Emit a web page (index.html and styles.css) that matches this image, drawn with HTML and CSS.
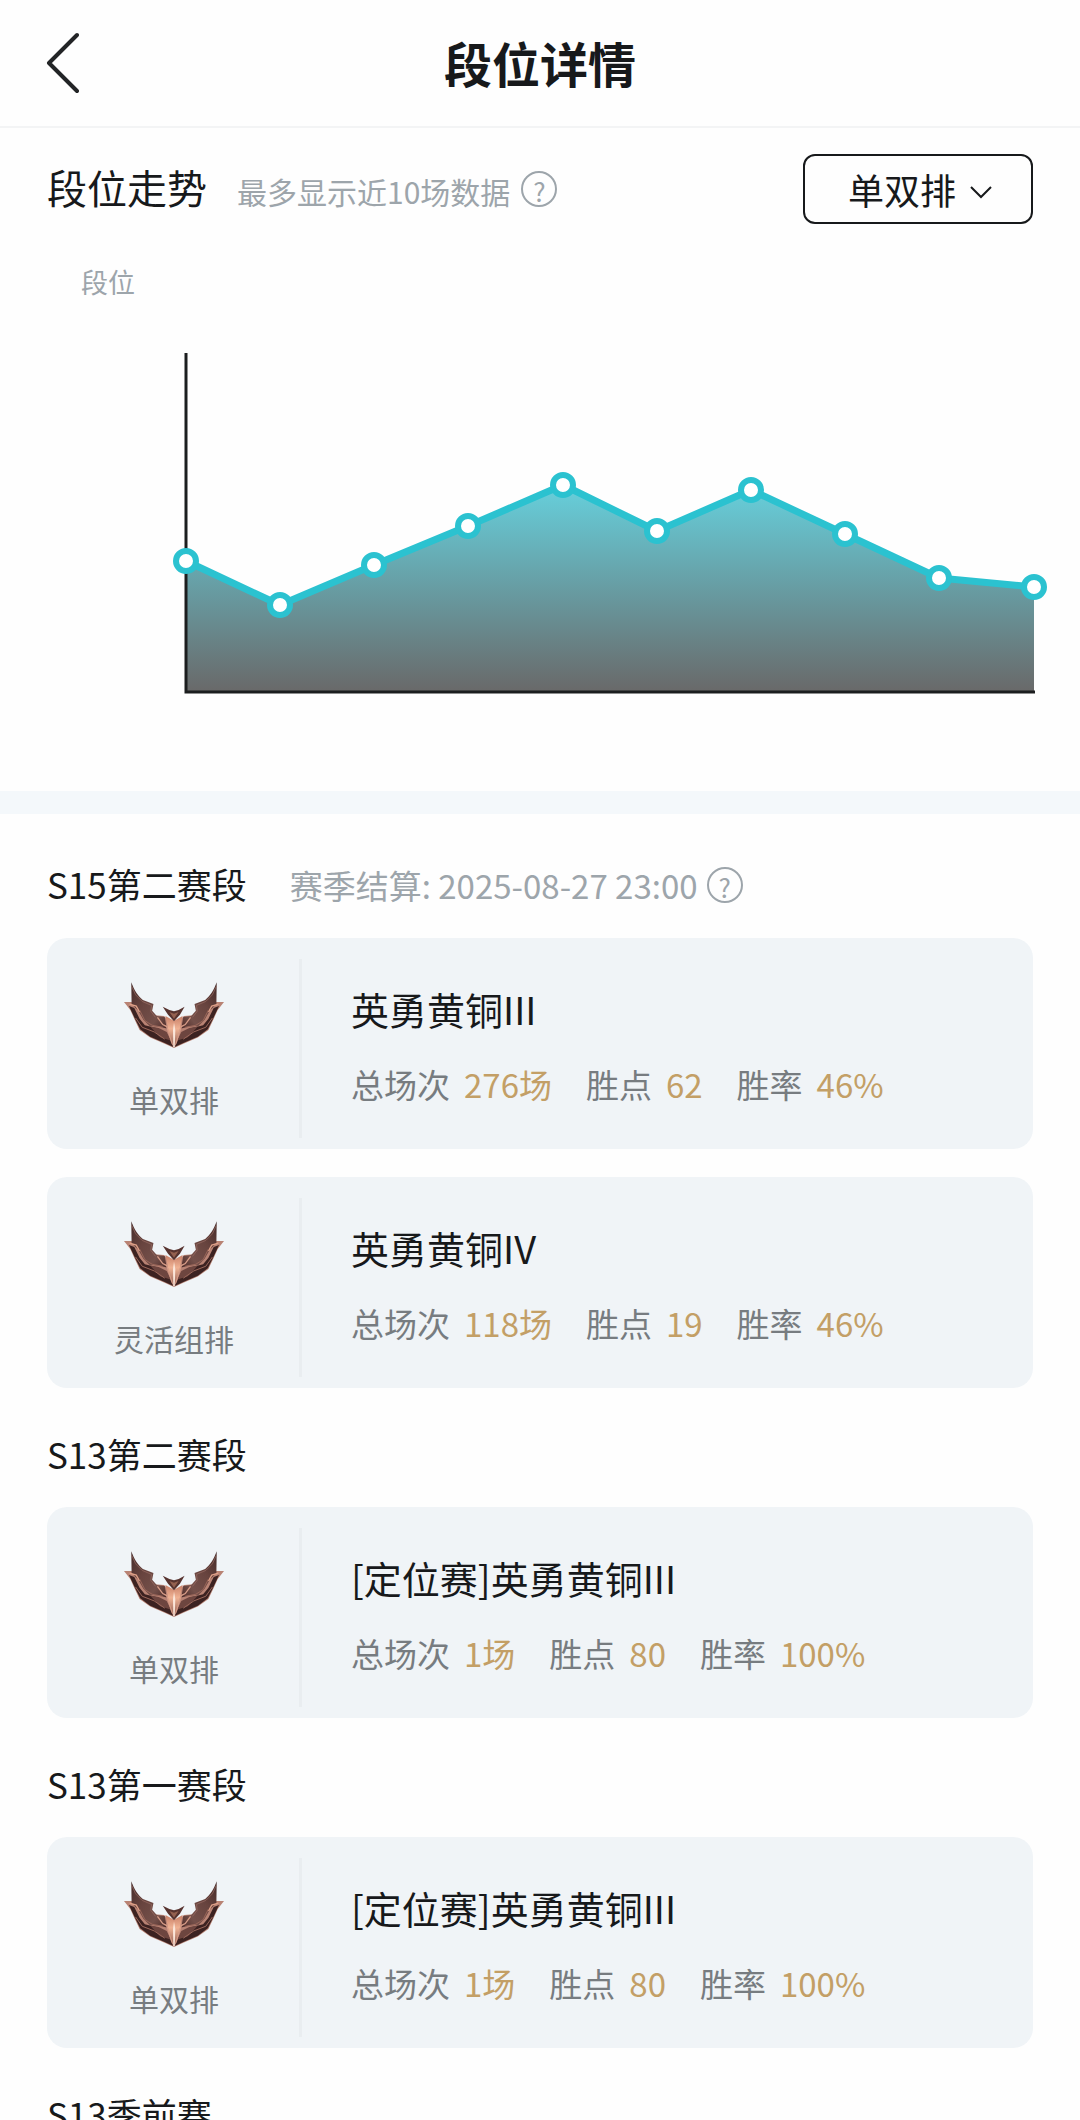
FILE: index.html
```html
<!DOCTYPE html>
<html lang="zh-CN">
<head>
<meta charset="utf-8">
<meta name="viewport" content="width=device-width, initial-scale=1">
<title>段位详情</title>
<link rel="stylesheet" href="styles.css">
</head>
<body>
<svg class="defs" width="0" height="0" aria-hidden="true">
  <defs>
    <linearGradient id="wing" x1="0" y1="0" x2="1" y2="1">
      <stop offset="0" stop-color="#432928"/>
      <stop offset="0.4" stop-color="#68443f"/>
      <stop offset="0.75" stop-color="#74504a"/>
      <stop offset="1" stop-color="#4c2b29"/>
    </linearGradient>
    <linearGradient id="core" x1="0" y1="0" x2="0" y2="1">
      <stop offset="0" stop-color="#c98068"/>
      <stop offset="0.4" stop-color="#efb294"/>
      <stop offset="1" stop-color="#8d5a50"/>
    </linearGradient>
    <g id="half">
      <path fill="#b98374" d="M7 78L34 78L60 100L100 118L128 120L140 132L158 217L128 203L86 185L54 162L38 128L26 102Z"/>
      <path fill="url(#wing)" d="M29 18C38 42 48 58 64 72L96 84L92 104L106 120L130 123L136 158L112 152L84 150L66 132L50 104L30 84Z"/>
      <path fill="#3c2221" d="M22 90L38 96L54 128L70 148L104 156L136 172L156 214L128 201L86 183L56 160L40 128Z"/>
      <path fill="#6d453f" d="M86 152L112 156L136 168L148 194L116 184Z"/>
      <path fill="none" stroke="#e0a188" stroke-width="4" d="M24 84L44 90L54 108"/>
      <path fill="none" stroke="#9c685b" stroke-width="3" d="M54 102L70 134L92 148L124 154M42 126L62 154L98 168L130 190"/>
      <path fill="none" stroke="#d79c87" stroke-width="4" d="M108 124L124 146L136 152L154 206"/>
      <path fill="none" stroke="#9c6f66" stroke-width="2" d="M30 30L42 56L62 76L90 88L88 106L102 124"/>
    </g>
    <symbol id="bronze" viewBox="4 14 308 206">
      <use href="#half"/>
      <use href="#half" transform="matrix(-1 0 0 1 316 0)"/>
      <path fill="url(#core)" d="M132 120L158 134L184 120L174 166L158 216L142 166Z"/>
      <path fill="#fbe6da" d="M155 162L158 140L162 162L160 214L156 214Z"/>
      <path fill="#57332f" d="M124 92L144 102L158 106L172 102L190 92L176 116L158 136L140 116Z"/>
      <path fill="#94604f" d="M144 108L158 113L172 108L158 128Z"/>
    </symbol>
  </defs>
</svg>
<div class="app">
  <header class="topbar">
    <button class="back" type="button" aria-label="返回">
      <svg width="34" height="62" viewBox="0 0 34 62" aria-hidden="true"><path d="M32 3L4 31L32 59"/></svg>
    </button>
    <h1 class="page-title">段位详情</h1>
  </header>

  <main>
    <section class="trend">
      <div class="trend-head">
        <div class="heading-row">
          <h2 class="trend-title">段位走势</h2>
          <span class="trend-note">最多显示近10场数据</span>
          <button class="help" type="button" aria-label="数据说明">?</button>
        </div>
        <div class="picker">
          <select class="picker-select" aria-label="排位类型">
            <option>单双排</option>
            <option>灵活组排</option>
          </select>
          <svg class="picker-arrow" width="22" height="13" viewBox="0 0 22 13" aria-hidden="true"><path d="M1 1L11 11L21 1"/></svg>
        </div>
      </div>
      <p class="axis-label">段位</p>
      <svg class="chart" viewBox="0 299 1080 431" role="img" aria-label="近10场段位走势图">
        <defs>
          <linearGradient id="area" gradientUnits="userSpaceOnUse" x1="0" y1="485" x2="0" y2="691">
            <stop offset="0" stop-color="#66d0dc"/>
            <stop offset="1" stop-color="#696969"/>
          </linearGradient>
        </defs>
        <path fill="url(#area)" d="M186 560L280 604L374 564L468 525L563 484L657 530L751 489L845 533L939 577L1034 586V691H186Z"/>
        <path class="axis" d="M186 352V691H1035"/>
        <path class="line" d="M186 560L280 604L374 564L468 525L563 484L657 530L751 489L845 533L939 577L1034 586"/>
        <g class="dots">
          <circle cx="186" cy="560" r="10"/>
          <circle cx="280" cy="604" r="10"/>
          <circle cx="374" cy="564" r="10"/>
          <circle cx="468" cy="525" r="10"/>
          <circle cx="563" cy="484" r="10"/>
          <circle cx="657" cy="530" r="10"/>
          <circle cx="751" cy="489" r="10"/>
          <circle cx="845" cy="533" r="10"/>
          <circle cx="939" cy="577" r="10"/>
          <circle cx="1034" cy="586" r="10"/>
        </g>
      </svg>
    </section>

    <div class="seasons">
      <section class="season">
        <div class="heading-row season-head">
          <h2 class="season-title">S15第二赛段</h2>
          <span class="season-note">赛季结算: 2025-08-27 23:00</span>
          <button class="help" type="button" aria-label="结算说明">?</button>
        </div>
        <div class="cards">
          <article class="card">
            <div class="queue">
              <svg class="emblem" aria-hidden="true"><use href="#bronze"/></svg>
              <span class="queue-name">单双排</span>
            </div>
            <div class="record">
              <h3 class="tier">英勇黄铜III</h3>
              <dl class="stats">
                <div class="stat"><dt>总场次</dt><dd>276场</dd></div>
                <div class="stat"><dt>胜点</dt><dd>62</dd></div>
                <div class="stat"><dt>胜率</dt><dd>46%</dd></div>
              </dl>
            </div>
          </article>
          <article class="card">
            <div class="queue">
              <svg class="emblem" aria-hidden="true"><use href="#bronze"/></svg>
              <span class="queue-name">灵活组排</span>
            </div>
            <div class="record">
              <h3 class="tier">英勇黄铜IV</h3>
              <dl class="stats">
                <div class="stat"><dt>总场次</dt><dd>118场</dd></div>
                <div class="stat"><dt>胜点</dt><dd>19</dd></div>
                <div class="stat"><dt>胜率</dt><dd>46%</dd></div>
              </dl>
            </div>
          </article>
        </div>
      </section>

      <section class="season">
        <div class="heading-row season-head">
          <h2 class="season-title">S13第二赛段</h2>
        </div>
        <div class="cards">
          <article class="card">
            <div class="queue">
              <svg class="emblem" aria-hidden="true"><use href="#bronze"/></svg>
              <span class="queue-name">单双排</span>
            </div>
            <div class="record">
              <h3 class="tier">[定位赛]英勇黄铜III</h3>
              <dl class="stats">
                <div class="stat"><dt>总场次</dt><dd>1场</dd></div>
                <div class="stat"><dt>胜点</dt><dd>80</dd></div>
                <div class="stat"><dt>胜率</dt><dd>100%</dd></div>
              </dl>
            </div>
          </article>
        </div>
      </section>

      <section class="season">
        <div class="heading-row season-head">
          <h2 class="season-title">S13第一赛段</h2>
        </div>
        <div class="cards">
          <article class="card">
            <div class="queue">
              <svg class="emblem" aria-hidden="true"><use href="#bronze"/></svg>
              <span class="queue-name">单双排</span>
            </div>
            <div class="record">
              <h3 class="tier">[定位赛]英勇黄铜III</h3>
              <dl class="stats">
                <div class="stat"><dt>总场次</dt><dd>1场</dd></div>
                <div class="stat"><dt>胜点</dt><dd>80</dd></div>
                <div class="stat"><dt>胜率</dt><dd>100%</dd></div>
              </dl>
            </div>
          </article>
        </div>
      </section>

      <section class="season">
        <div class="heading-row season-head">
          <h2 class="season-title">S13季前赛</h2>
        </div>
      </section>
    </div>
  </main>
</div>
</body>
</html>
```
FILE: styles.css
```css
* {
  box-sizing: border-box;
}

body {
  margin: 0;
  background: #fefefe;
  color: #17191b;
  font-family: "Noto Sans CJK SC", "Noto Sans", sans-serif;
}

h1,
h2,
h3,
p,
dl,
dd {
  margin: 0;
  font-weight: 400;
}

button,
select {
  margin: 0;
  padding: 0;
  border: 0;
  background: none;
  color: inherit;
  font-family: inherit;
}

svg {
  display: block;
}

.defs {
  position: absolute;
}

.app {
  height: 100vh;
  overflow: hidden auto;
  scrollbar-width: none;
}

/* Top bar */
.topbar {
  display: grid;
  grid-template-columns: 1fr auto 1fr;
  align-items: center;
  height: 128px;
  padding: 0 45px;
  border-bottom: 2px solid #f3f4f5;
}

.back {
  justify-self: start;
}

.back path {
  fill: none;
  stroke: #222426;
  stroke-width: 4;
  stroke-linecap: round;
  stroke-linejoin: round;
}

.page-title {
  padding-bottom: 2px;
  font-size: 48px;
  font-weight: 700;
  line-height: 64px;
}

/* Trend */
.trend {
  padding: 26px 0 60px;
  border-bottom: 23px solid #f4f8fb;
}

.trend-head {
  display: flex;
  align-items: center;
  justify-content: space-between;
  padding: 0 47px;
}

.heading-row {
  display: flex;
  align-items: baseline;
}

.trend-title {
  font-size: 40px;
  line-height: 48px;
}

.trend-note {
  margin-left: 30px;
  color: #9da5ab;
  font-size: 30px;
  line-height: 48px;
}

.help {
  align-self: center;
  width: 36px;
  height: 36px;
  margin-left: 11px;
  padding-top: 4px;
  border: 2px solid #9da5ab;
  border-radius: 50%;
  color: #9da5ab;
  font-size: 26px;
  line-height: 28px;
  text-align: center;
}

.picker {
  position: relative;
}

.picker-select {
  display: block;
  width: 230px;
  height: 70px;
  padding: 0 0 0 43px;
  border: 2px solid #17191b;
  border-radius: 12px;
  font-size: 36px;
  appearance: none;
}

.picker-arrow {
  position: absolute;
  top: 32px;
  right: 41px;
  pointer-events: none;
}

.picker-arrow path {
  fill: none;
  stroke: #17191b;
  stroke-width: 2;
}

.axis-label {
  margin-top: 40px;
  padding: 0 81px;
  color: #9da5ab;
  font-size: 27px;
  line-height: 36px;
}

.chart {
  width: 100%;
  height: auto;
}

.axis {
  fill: none;
  stroke: #1c1e1f;
  stroke-width: 3;
}

.line {
  fill: none;
  stroke: #2bc2d0;
  stroke-width: 7;
  stroke-linejoin: round;
}

.dots circle {
  fill: #fff;
  stroke: #2bc2d0;
  stroke-width: 6;
}

/* Seasons */
.seasons {
  padding: 4px 47px 0;
}

.season-head {
  padding: 42px 0 29px;
}

.season-title {
  font-size: 35px;
  line-height: 48px;
}

.season-note {
  margin-left: 43px;
  color: #9da5ab;
  font-size: 33px;
  line-height: 48px;
}

.season-head .help {
  margin-left: 9px;
}

.cards {
  display: grid;
  gap: 28px;
}

.card {
  display: flex;
  min-height: 211px;
  border-radius: 20px;
  background: #f0f4f7;
}

.queue {
  display: flex;
  flex-direction: column;
  align-items: center;
  width: 255px;
  margin: 21px 0 11px;
  padding: 21px 0 0 2px;
  border-right: 3px solid #e9edf0;
}

.emblem {
  width: 102px;
  height: 70px;
}

.queue-name {
  margin-top: 29px;
  color: #777c80;
  font-size: 30px;
  line-height: 40px;
}

.record {
  flex: 1;
  padding: 47px 20px 0 49px;
}

.tier {
  font-size: 38px;
  line-height: 48px;
}

.stats {
  display: flex;
  gap: 34px;
  margin-top: 31px;
  font-size: 33px;
  line-height: 40px;
}

.stat {
  display: flex;
  gap: 14px;
}

.stat dt {
  color: #777c80;
}

.stat dd {
  color: #c39f66;
}
```
